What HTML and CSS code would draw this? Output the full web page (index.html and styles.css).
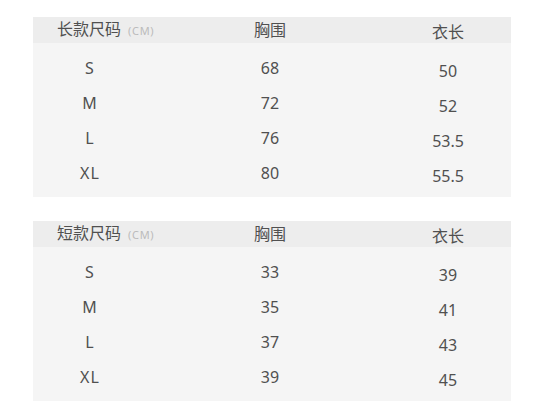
FILE: index.html
```html
<!DOCTYPE html>
<html lang="zh">
<head>
<meta charset="utf-8">
<link rel="stylesheet" href="styles.css">
</head>
<body>
<div class="page">
  <section class="table">
    <div class="row head">
      <div class="c1">长款尺码<span class="unit">(CM)</span></div>
      <div class="c2">胸围</div>
      <div class="c3">衣长</div>
    </div>
    <div class="body">
      <div class="row"><div class="c1">S</div><div class="c2">68</div><div class="c3">50</div></div>
      <div class="row"><div class="c1">M</div><div class="c2">72</div><div class="c3">52</div></div>
      <div class="row"><div class="c1">L</div><div class="c2">76</div><div class="c3">53.5</div></div>
      <div class="row"><div class="c1">XL</div><div class="c2">80</div><div class="c3">55.5</div></div>
    </div>
  </section>
  <section class="table">
    <div class="row head">
      <div class="c1">短款尺码<span class="unit">(CM)</span></div>
      <div class="c2">胸围</div>
      <div class="c3">衣长</div>
    </div>
    <div class="body">
      <div class="row"><div class="c1">S</div><div class="c2">33</div><div class="c3">39</div></div>
      <div class="row"><div class="c1">M</div><div class="c2">35</div><div class="c3">41</div></div>
      <div class="row"><div class="c1">L</div><div class="c2">37</div><div class="c3">43</div></div>
      <div class="row"><div class="c1">XL</div><div class="c2">39</div><div class="c3">45</div></div>
    </div>
  </section>
</div>
</body>
</html>
```
FILE: styles.css
```css
html, body {
  margin: 0;
  padding: 0;
  background: #ffffff;
}
body {
  font-family: "Noto Sans", "Noto Sans CJK SC", sans-serif;
  color: #505050;
}
.page {
  padding: 17px 0 0 33px;
  display: flex;
  flex-direction: column;
  gap: 24px;
  width: 478px;
}
.table {
  background: #f5f5f5;
}
.row {
  display: grid;
  grid-template-columns: 114px 246px 110px;
  align-items: center;
}
.row > div {
  text-align: center;
}
.head {
  background: #ededed;
  height: 26px;
  font-size: 16px;
  line-height: 26px;
}
.head .c1 {
  text-align: left;
  padding-left: 24px;
  white-space: nowrap;
  position: relative;
  top: -1px;
}
.head .c2 {
  position: relative;
  top: -1px;
}
.head .c3 {
  position: relative;
  top: 1px;
}
.unit {
  font-size: 11px;
  color: #bbbbbb;
  margin-left: 7px;
  letter-spacing: 0.7px;
}
.body {
  padding: 7px 0 7px;
}
.body .row {
  height: 35px;
  font-size: 16px;
  line-height: 20px;
}
.body .c3 {
  position: relative;
  top: 3px;
}
.body .c1 {
  letter-spacing: 1px;
}
```
